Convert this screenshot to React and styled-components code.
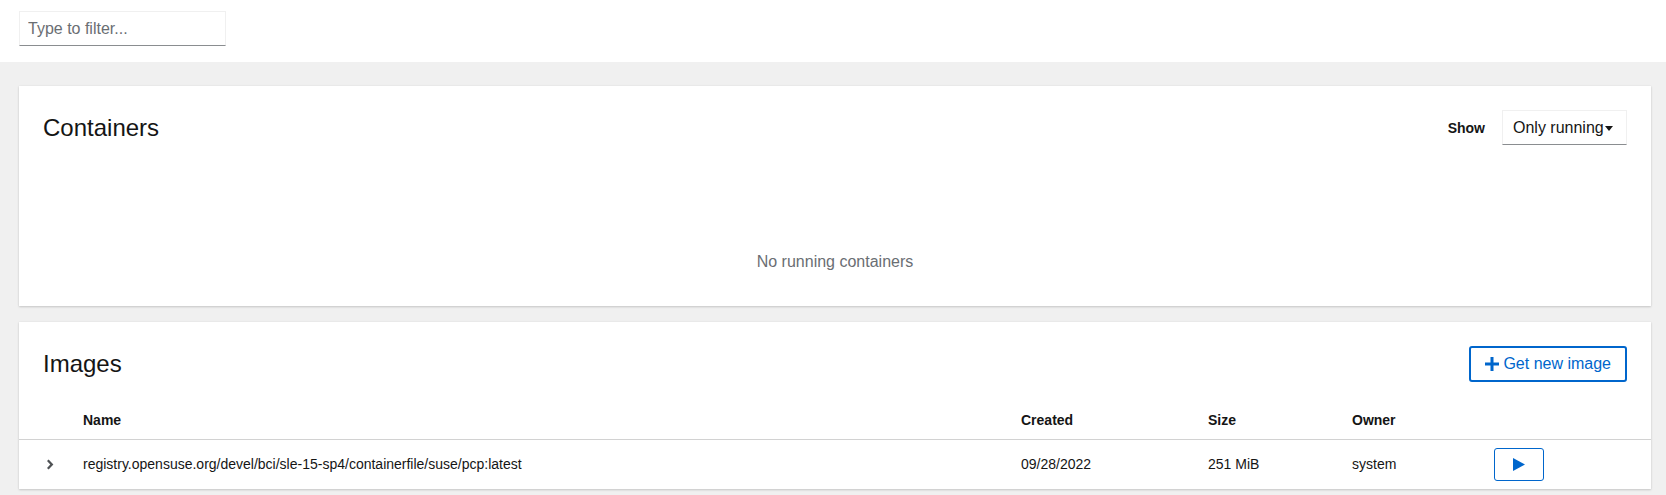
import React from 'react';
import styled, { createGlobalStyle } from 'styled-components';

const GlobalStyle = createGlobalStyle`
    html, body {
        margin: 0;
        padding: 0;
        background: #f0f0f0;
        font-family: "Liberation Sans", Arial, sans-serif;
        color: #151515;
    }
    * {
        box-sizing: border-box;
    }
`;

const images = [
    {
        name: 'registry.opensuse.org/devel/bci/sle-15-sp4/containerfile/suse/pcp:latest',
        created: '09/28/2022',
        size: '251 MiB',
        owner: 'system',
    },
];

const App = () => {
    return (
        <Page>
            <GlobalStyle />
            <FilterBar>
                <FilterInput placeholder='Type to filter...' />
            </FilterBar>
            <Content>
                <Card>
                    <CardHeader>
                        <Title>Containers</Title>
                        <Actions>
                            <ShowLabel>Show</ShowLabel>
                            <Select>
                                Only running
                                <Caret />
                            </Select>
                        </Actions>
                    </CardHeader>
                    <EmptyState>No running containers</EmptyState>
                </Card>

                <Card>
                    <CardHeader>
                        <Title>Images</Title>
                        <OutlineButton>
                            <svg width='14' height='14' viewBox='0 0 14 14'>
                                <rect x='5.5' y='0' width='3' height='14' fill='#0066cc' />
                                <rect x='0' y='5.5' width='14' height='3' fill='#0066cc' />
                            </svg>
                            Get new image
                        </OutlineButton>
                    </CardHeader>
                    <Table>
                        <HeadRow>
                            <span />
                            <span>Name</span>
                            <span>Created</span>
                            <span>Size</span>
                            <span>Owner</span>
                            <span />
                        </HeadRow>
                        {images.map((img) => (
                            <BodyRow key={img.name}>
                                <Toggle>
                                    <svg width='7' height='11' viewBox='0 0 7 11'>
                                        <path d='M1.6 0.4 L6.4 5.5 L1.6 10.6 L0 9 L3.3 5.5 L0 2 Z' fill='#4f5255' />
                                    </svg>
                                </Toggle>
                                <span>{img.name}</span>
                                <span>{img.created}</span>
                                <span>{img.size}</span>
                                <span>{img.owner}</span>
                                <span>
                                    <PlayButton>
                                        <svg width='12' height='13' viewBox='0 0 12 13'>
                                            <path d='M0 0 L12 6.5 L0 13 Z' fill='#0066cc' />
                                        </svg>
                                    </PlayButton>
                                </span>
                            </BodyRow>
                        ))}
                    </Table>
                </Card>
            </Content>
        </Page>
    );
};

export default App;

const Page = styled.div`
    min-height: 495px;
    background: #f0f0f0;
`;

const FilterBar = styled.div`
    background: #fff;
    padding: 11px 19px 16px;
`;

const FilterInput = styled.input`
    display: block;
    width: 207px;
    height: 35px;
    padding: 0 8px;
    border: 1px solid #f0f0f0;
    border-bottom-color: #8a8d90;
    font-family: "Liberation Sans", Arial, sans-serif;
    font-size: 16px;
    color: #151515;
    outline: none;
    &::placeholder {
        color: #6a6e73;
    }
`;

const Content = styled.div`
    padding: 24px 15px 6px 19px;
    display: flex;
    flex-direction: column;
    gap: 16px;
`;

const Card = styled.section`
    background: #fff;
    box-shadow: 0 1px 2px 0 rgba(3, 3, 3, 0.16), 0 0 2px 0 rgba(3, 3, 3, 0.06);
`;

const CardHeader = styled.div`
    display: flex;
    align-items: center;
    justify-content: space-between;
    padding: 24px 24px 0 24px;
`;

const Title = styled.h2`
    margin: 0;
    font-size: 24px;
    font-weight: 400;
    line-height: 30px;
`;

const Actions = styled.div`
    display: flex;
    align-items: center;
    gap: 17px;
`;

const ShowLabel = styled.span`
    font-size: 14px;
    font-weight: 700;
`;

const Select = styled.div`
    display: flex;
    align-items: center;
    width: 125px;
    height: 35px;
    padding: 0 10px;
    font-size: 16px;
    border: 1px solid #f0f0f0;
    border-bottom-color: #8a8d90;
`;

const Caret = styled.span`
    width: 0;
    height: 0;
    margin-left: 1px;
    margin-top: 2px;
    border-left: 4.5px solid transparent;
    border-right: 4.5px solid transparent;
    border-top: 5px solid #151515;
`;

const EmptyState = styled.div`
    padding: 105px 0 32px;
    text-align: center;
    font-size: 16px;
    line-height: 24px;
    color: #6a6e73;
`;

const OutlineButton = styled.button`
    display: flex;
    align-items: center;
    gap: 4px;
    height: 36px;
    padding: 0 14px;
    white-space: nowrap;
    background: #fff;
    border: 2px solid #0066cc;
    border-radius: 3px;
    color: #0066cc;
    font-family: "Liberation Sans", Arial, sans-serif;
    font-size: 16px;
`;

const Table = styled.div`
    margin-top: 0;
`;

const Row = styled.div`
    display: grid;
    grid-template-columns: 64px 938px 187px 144px 142px 1fr;
    align-items: center;
    font-size: 14px;
    line-height: 21px;
`;

const HeadRow = styled(Row)`
    padding: 28px 0 8px;
    font-weight: 700;
    border-bottom: 1px solid #d2d2d2;
`;

const BodyRow = styled(Row)`
    padding: 8px 0;
`;

const Toggle = styled.span`
    display: flex;
    padding-left: 28px;
`;

const PlayButton = styled.button`
    display: flex;
    align-items: center;
    justify-content: center;
    width: 50px;
    height: 33px;
    padding: 0;
    background: #fff;
    border: 1px solid #0066cc;
    border-radius: 3px;
`;
